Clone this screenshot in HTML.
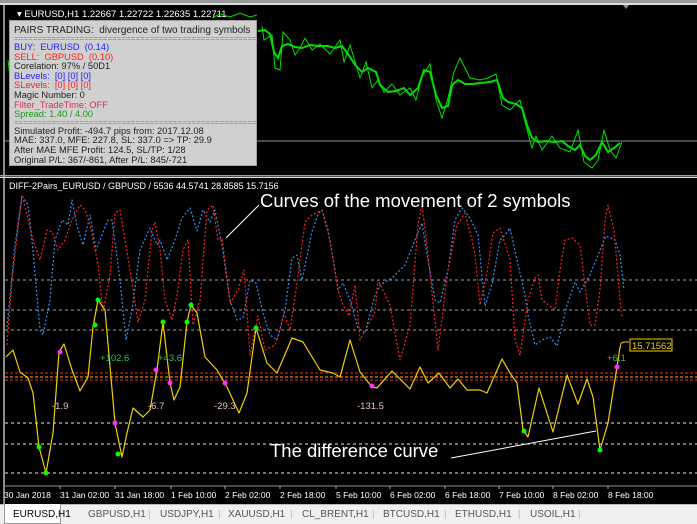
<!DOCTYPE html>
<html><head><meta charset="utf-8"><style>
html,body{margin:0;padding:0;background:#000;width:697px;height:523px;overflow:hidden;font-family:"Liberation Sans",sans-serif}
#info{position:absolute;left:9px;top:20px;width:248px;height:146px;background:#d0d0d0;border:1px solid #a0a0a0;font-size:9.3px;line-height:9.6px;padding:4px 0 0 4px;box-sizing:border-box;color:#222}
.b{color:#2020ff}.r{color:#ff2020}.g{color:#1a9a1a}.p{color:#e03050}
.sep{color:#888;overflow:hidden;white-space:nowrap;height:7px;line-height:6px;font-size:8px}
.tabs{position:absolute;left:0;top:504px;width:697px;height:19px;background:#f0f0f0;border-top:1px solid #bbb;font-size:10px;color:#555}
.tabs span{position:absolute;top:4px}
</style></head><body>
<svg width="697" height="523" style="position:absolute;left:0;top:0" font-family="Liberation Sans, sans-serif">
<rect x="0" y="0" width="697" height="3" fill="#9a9a9a"/>
<rect x="0" y="3" width="697" height="2" fill="#dcdcdc"/>
<rect x="3" y="5" width="2" height="500" fill="#8a8a8a"/>
<rect x="0" y="175" width="697" height="1.5" fill="#a0a0a0"/>
<rect x="0" y="177" width="697" height="1" fill="#e0e0e0"/>
<text x="17" y="17" fill="#fff" font-size="9.5">▾ EURUSD,H1  1.22667 1.22722 1.22635 1.22711</text>
<polygon points="623,5 629,5 626,9" fill="#8090a0"/>
<line x1="5" y1="141" x2="697" y2="141" fill="none" stroke="#909090"/>
<g stroke="#00e000" stroke-width="1" fill="none">
<polyline stroke-width="2" points="258,31 265,30 270,34 274,52 278,58 282,46 288,44 295,47 302,48 310,45 318,46 328,46 335,48 342,46 348,54 356,66 362,72 368,68 376,72 380,85 388,92 396,91 404,88 410,95 418,88 424,70 430,72 436,95 442,108 448,106 452,85 458,80 465,84 472,84 480,83 490,82 497,80 503,98 508,102 516,104 522,108 527,125 532,138 538,142 546,141 555,142 562,141 568,146 575,150 580,145 585,156 590,160 596,155 602,142 608,152 614,148 620,143"/>
<polyline stroke-width="1" points="262,26 264,40 272,35 275,68 280,70 283,32 290,40 295,55 300,48 305,38 312,50 320,44 330,54 340,40 344,62 350,45 360,78 366,62 372,88 378,80 384,92 392,84 400,95 410,88 416,100 422,76 430,64 436,100 442,118 448,98 454,72 460,58 470,78 480,80 488,78 496,74 502,105 510,110 520,100 524,118 532,148 536,136 542,150 552,136 560,148 570,152 578,130 584,162 592,168 598,160 604,130 610,150 616,158 622,142"/>
<polyline points="8,60 12,95 16,70 22,85"/>
<polyline points="212,18 220,14 230,17 240,13 250,17 257,15"/>
</g>
<rect x="5" y="178" width="692" height="307" fill="#000"/>
<text x="9" y="189" fill="#fff" font-size="9">DIFF-2Pairs_EURUSD / GBPUSD / 5536 44.5741 28.8585 15.7156</text>
<g stroke="#a0a0a0" stroke-dasharray="3,3" stroke-width="1">
<line x1="5" y1="280" x2="697" y2="280"/><line x1="5" y1="310" x2="697" y2="310"/><line x1="5" y1="330" x2="697" y2="330"/>
</g>
<g stroke="#e8e8e8" stroke-dasharray="3,3" stroke-width="1">
<line x1="5" y1="423" x2="697" y2="423"/><line x1="5" y1="444" x2="697" y2="444"/><line x1="5" y1="473" x2="697" y2="473"/>
</g>
<line x1="5" y1="373" x2="697" y2="373" stroke="#ff2020" stroke-dasharray="3,2"/>
<line x1="5" y1="377" x2="697" y2="377" stroke="#c07000" stroke-dasharray="3,2" stroke-width="1.5"/>
<line x1="5" y1="380" x2="697" y2="380" stroke="#ff2020" stroke-dasharray="3,2"/>
<polyline fill="none" stroke="#3090f0" stroke-dasharray="2,2" stroke-width="1.2" stroke-linejoin="round" points="7,327 15,245 22,196 28,205 33,250 40,330 43,335 50,300 55,240 62,220 68,225 72,200 77,226 83,245 90,215 96,250 102,235 108,220 112,220 120,280 126,340 132,310 140,250 150,228 157,245 160,240 167,260 175,240 182,218 190,208 197,231 203,210 210,222 215,210 222,245 230,300 237,320 243,318 250,280 256,283 263,313 270,335 277,340 285,310 292,258 297,255 302,280 312,232 318,214 322,210 328,230 335,270 338,290 343,283 350,300 358,328 365,333 375,295 380,285 392,278 405,265 415,240 422,223 428,260 435,300 440,303 448,270 455,220 462,208 470,218 478,235 485,306 492,284 500,240 505,235 510,228 517,260 525,295 528,315 535,345 542,340 550,337 557,346 567,305 575,282 580,292 590,275 600,250 606,236 615,240 620,255 624,290"/>
<polyline fill="none" stroke="#ff2020" stroke-dasharray="2,2" stroke-width="1.2" stroke-linejoin="round" points="7,345 12,280 22,195 33,240 40,260 47,230 52,232 58,250 65,240 72,220 80,205 85,210 90,225 98,264 103,312 110,275 115,213 120,210 130,270 138,322 145,300 152,230 155,222 160,250 165,300 172,320 177,295 183,250 188,240 193,325 200,300 207,210 213,205 218,240 222,238 230,303 238,290 244,270 250,355 258,316 265,350 275,345 280,330 284,313 290,330 296,290 305,222 312,215 322,210 330,240 338,290 343,305 349,316 355,285 360,340 375,312 378,280 390,305 400,360 410,325 418,225 422,205 427,245 438,350 448,270 457,225 465,213 472,240 475,255 480,305 487,273 493,233 500,228 510,260 515,340 520,355 528,300 535,278 538,275 542,300 555,310 560,270 565,240 572,238 580,245 590,325 595,325 600,290 605,220 608,205 614,230 620,300 622,318"/>
<polyline fill="none" stroke="#f0d000" stroke-width="1.2" stroke-linejoin="round" points="6,357 13,350 20,372 28,378 33,393 39,447 46,473 53,433 59,352 64,344 72,370 80,391 88,377 93,327 98,300 105,310 115,423 122,457 127,433 133,408 143,417 150,410 157,370 163,322 170,383 174,400 180,387 187,322 191,305 197,313 205,357 217,370 227,387 239,413 247,393 256,328 267,363 277,373 292,338 303,342 320,370 333,373 340,377 350,340 360,372 372,387 377,388 392,371 410,389 420,367 428,383 439,373 450,388 458,379 467,390 480,390 487,393 502,359 510,373 517,383 523,430 528,437 539,388 553,432 567,375 578,404 587,379 593,397 600,450 608,423 617,367 620,347"/>
<polyline fill="none" stroke="#f0d000" points="620,348 621,343 624,342 629,342"/>
<rect x="630" y="339" width="42" height="12" fill="#000" stroke="#f0d000"/>
<text x="632" y="349" fill="#f0d000" font-size="9.5">15.71562</text>
<g fill="#00ff00">
<circle cx="39" cy="447" r="2.5"/><circle cx="46" cy="473" r="2.5"/><circle cx="98" cy="300" r="2.5"/><circle cx="95" cy="325" r="2.5"/><circle cx="118" cy="454" r="2.5"/><circle cx="163" cy="322" r="2.5"/><circle cx="187" cy="322" r="2.5"/><circle cx="191" cy="305" r="2.5"/><circle cx="256" cy="328" r="2.5"/><circle cx="524" cy="431" r="2.5"/><circle cx="600" cy="450" r="2.5"/>
</g>
<g fill="#ff30ff">
<circle cx="60" cy="352" r="2.5"/><circle cx="115" cy="423" r="2.5"/><circle cx="156" cy="370" r="2.5"/><circle cx="170" cy="383" r="2.5"/><circle cx="225" cy="383" r="2.5"/><circle cx="372" cy="386" r="2.5"/><circle cx="617" cy="367" r="2.5"/>
</g>
<g font-size="9.5">
<text x="100" y="361" fill="#30c060">+102.6</text><text x="158" y="361" fill="#30c060">+43.6</text><text x="607" y="361" fill="#30c060">+6.1</text>
<text x="52" y="409" fill="#e8c0c0">-1.9</text><text x="148" y="409" fill="#e8c0c0">-6.7</text><text x="214" y="409" fill="#e8c0c0">-29.3</text><text x="357" y="409" fill="#e8c0c0">-131.5</text>
</g>
<text x="260" y="207" fill="#fff" font-size="18.5">Curves of the movement of 2 symbols</text>
<line x1="259" y1="205" x2="226" y2="238" stroke="#fff"/>
<text x="270" y="457" fill="#fff" font-size="18.5">The difference curve</text>
<line x1="451" y1="458" x2="596" y2="431" stroke="#fff"/>
<line x1="5" y1="486" x2="697" y2="486" stroke="#909090"/>
<g fill="#fff" font-size="8.5">
<text x="4" y="498">30 Jan 2018</text><text x="60" y="498">31 Jan 02:00</text><text x="115" y="498">31 Jan 18:00</text><text x="171" y="498">1 Feb 10:00</text><text x="225" y="498">2 Feb 02:00</text><text x="280" y="498">2 Feb 18:00</text><text x="336" y="498">5 Feb 10:00</text><text x="390" y="498">6 Feb 02:00</text><text x="445" y="498">6 Feb 18:00</text><text x="499" y="498">7 Feb 10:00</text><text x="553" y="498">8 Feb 02:00</text><text x="608" y="498">8 Feb 18:00</text>
</g>
<g stroke="#aaa"><line x1="60" y1="486" x2="60" y2="489"/><line x1="115" y1="486" x2="115" y2="489"/><line x1="171" y1="486" x2="171" y2="489"/><line x1="225" y1="486" x2="225" y2="489"/><line x1="280" y1="486" x2="280" y2="489"/><line x1="336" y1="486" x2="336" y2="489"/><line x1="390" y1="486" x2="390" y2="489"/><line x1="445" y1="486" x2="445" y2="489"/><line x1="499" y1="486" x2="499" y2="489"/><line x1="553" y1="486" x2="553" y2="489"/><line x1="608" y1="486" x2="608" y2="489"/></g>
</svg>
<div id="info">
<div style="font-size:10px;line-height:11px">PAIRS TRADING:&nbsp; divergence of two trading symbols</div>
<div class="sep">============================================================</div>
<div class="b">BUY:&nbsp; EURUSD&nbsp; (0.14)</div>
<div class="r">SELL:&nbsp; GBPUSD&nbsp; (0.10)</div>
<div>Corelation: 97% / 50D1</div>
<div class="b">BLevels:&nbsp; [0] [0] [0]</div>
<div class="r">SLevels:&nbsp; [0] [0] [0]</div>
<div>Magic Number: 0</div>
<div class="p">Filter_TradeTime: OFF</div>
<div class="g">Spread: 1.40 / 4.00</div>
<div class="sep">============================================================</div>
<div>Simulated Profit: -494.7 pips from: 2017.12.08</div>
<div>MAE: 337.0, MFE: 227.8, SL: 337.0 =&gt; TP: 29.9</div>
<div>After MAE MFE Profit: 124.5, SL/TP: 1/28</div>
<div>Original P/L: 367/-861, After P/L: 845/-721</div>
</div>
<div class="tabs">
<div style="position:absolute;left:4px;top:-1px;width:55px;height:19px;background:#fff;border:1px solid #999;border-top:none"></div>
<span style="left:13px;color:#000">EURUSD,H1</span>
<span style="left:88px">GBPUSD,H1</span><span style="left:148px;color:#bbb">|</span>
<span style="left:160px">USDJPY,H1</span><span style="left:218px;color:#bbb">|</span>
<span style="left:228px">XAUUSD,H1</span><span style="left:290px;color:#bbb">|</span>
<span style="left:302px">CL_BRENT,H1</span><span style="left:372px;color:#bbb">|</span>
<span style="left:383px">BTCUSD,H1</span><span style="left:444px;color:#bbb">|</span>
<span style="left:455px">ETHUSD,H1</span><span style="left:518px;color:#bbb">|</span>
<span style="left:530px">USOIL,H1</span><span style="left:578px;color:#bbb">|</span>
</div>
</body></html>
